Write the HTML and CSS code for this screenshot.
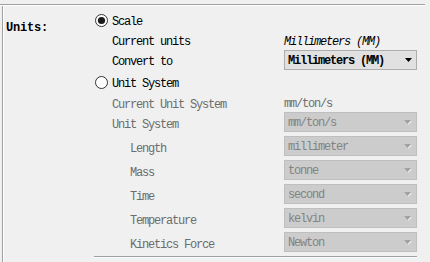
FILE: index.html
```html
<!DOCTYPE html>
<html>
<head>
<meta charset="utf-8">
<link rel="stylesheet" href="styles.css">
</head>
<body>
<div class="topline"></div>
<div class="frame">
  <div class="title">Units:</div>
  <div class="content">
    <div class="row radio-row">
      <svg class="radio" width="13" height="13" viewBox="0 0 13 13"><circle cx="6.5" cy="6.5" r="6" fill="#fff" stroke="#333"/><circle cx="6.5" cy="6.5" r="3.6" fill="#1a1a1a"/></svg>
      <span class="text">Scale</span>
    </div>
    <div class="row">
      <span class="label">Current units</span>
      <span class="value italic">Millimeters (MM)</span>
    </div>
    <div class="row">
      <span class="label">Convert to</span>
      <div class="select">
        <span class="sel-text strong">Millimeters (MM)</span>
        <svg class="arrow" width="7" height="4" viewBox="0 0 7 4"><path d="M0 0H7L3.5 4Z" fill="#000"/></svg>
      </div>
    </div>
    <div class="row radio-row second">
      <svg class="radio" width="13" height="13" viewBox="0 0 13 13"><circle cx="6.5" cy="6.5" r="6" fill="#fff" stroke="#333"/></svg>
      <span class="text">Unit System</span>
    </div>
    <div class="row dis">
      <span class="label">Current Unit System</span>
      <span class="value">mm/ton/s</span>
    </div>
    <div class="row dis">
      <span class="label">Unit System</span>
      <div class="select disabled"><span class="sel-text">mm/ton/s</span><svg class="arrow" width="8" height="5" viewBox="0 0 8 5"><path d="M0 0H7L3.5 4Z" fill="#a3a3a3"/><path d="M6 2L7 1L7.6 1.6L4.5 4.6L4 4Z" fill="#fff"/></svg></div>
    </div>
    <div class="row dis">
      <span class="label indent">Length</span>
      <div class="select disabled"><span class="sel-text">millimeter</span><svg class="arrow" width="8" height="5" viewBox="0 0 8 5"><path d="M0 0H7L3.5 4Z" fill="#a3a3a3"/><path d="M6 2L7 1L7.6 1.6L4.5 4.6L4 4Z" fill="#fff"/></svg></div>
    </div>
    <div class="row dis">
      <span class="label indent">Mass</span>
      <div class="select disabled"><span class="sel-text">tonne</span><svg class="arrow" width="8" height="5" viewBox="0 0 8 5"><path d="M0 0H7L3.5 4Z" fill="#a3a3a3"/><path d="M6 2L7 1L7.6 1.6L4.5 4.6L4 4Z" fill="#fff"/></svg></div>
    </div>
    <div class="row dis">
      <span class="label indent">Time</span>
      <div class="select disabled"><span class="sel-text">second</span><svg class="arrow" width="8" height="5" viewBox="0 0 8 5"><path d="M0 0H7L3.5 4Z" fill="#a3a3a3"/><path d="M6 2L7 1L7.6 1.6L4.5 4.6L4 4Z" fill="#fff"/></svg></div>
    </div>
    <div class="row dis">
      <span class="label indent">Temperature</span>
      <div class="select disabled"><span class="sel-text">kelvin</span><svg class="arrow" width="8" height="5" viewBox="0 0 8 5"><path d="M0 0H7L3.5 4Z" fill="#a3a3a3"/><path d="M6 2L7 1L7.6 1.6L4.5 4.6L4 4Z" fill="#fff"/></svg></div>
    </div>
    <div class="row dis">
      <span class="label indent">Kinetics Force</span>
      <div class="select disabled"><span class="sel-text">Newton</span><svg class="arrow" width="8" height="5" viewBox="0 0 8 5"><path d="M0 0H7L3.5 4Z" fill="#a3a3a3"/><path d="M6 2L7 1L7.6 1.6L4.5 4.6L4 4Z" fill="#fff"/></svg></div>
    </div>
    <div class="sep"></div>
  </div>
</div>
</body>
</html>
```
FILE: styles.css
```css
html, body {
  margin: 0;
  padding: 0;
  background: #f0f0f0;
  width: 430px;
  height: 262px;
  overflow: hidden;
  font-family: "Liberation Mono", "DejaVu Sans Mono", monospace;
  font-size: 12px;
  letter-spacing: -1.2px;
  color: #000;
}
.topline {
  margin-top: 4px;
  width: 425px;
  height: 1px;
  background: #a0a0a0;
  border-bottom: 1px solid #fff;
}
.frame {
  margin-left: 2px;
  height: 256px;
  border-left: 1px solid #a0a0a0;
  box-shadow: inset 1px 0 0 #fff;
  display: flex;
}
.title {
  width: 89px;
  padding-left: 3px;
  padding-top: 14px;
  height: 16px;
  line-height: 16px;
  font-weight: bold;
  letter-spacing: -0.2px;
}
.content {
  padding-top: 4px;
  display: flex;
  flex-direction: column;
}
.row {
  display: flex;
  align-items: center;
  height: 20px;
  padding-left: 17px;
}
.radio-row {
  padding-left: 0;
  gap: 4px;
}
.radio-row.second {
  margin-top: 2px;
}
.row.dis + .row.dis {
  margin-top: 4px;
}
.row.dis:nth-child(5) + .row.dis {
  margin-top: 0;
}
.radio {
  display: block;
  flex: none;
}
.text, .label, .value {
  padding-top: 4px;
  line-height: 16px;
}
.label {
  width: 172px;
  flex: none;
}
.label.indent {
  padding-left: 18px;
  width: 154px;
}
.dis .label, .dis .value {
  color: #6d6d6d;
}
.dis .label {
  padding-top: 5px;
}
.value.italic {
  font-style: italic;
}
.select {
  box-sizing: border-box;
  width: 133px;
  height: 20px;
  border: 1px solid #adadad;
  background: #e1e1e1;
  display: flex;
  align-items: center;
  justify-content: space-between;
  padding: 0 4px 0 3px;
}
.sel-text {
  padding-top: 2px;
  line-height: 16px;
}
.select.disabled {
  background: #cccccc;
  border-color: #bfbfbf;
  color: #838383;
}
.sel-text.strong {
  font-weight: bold;
}
.arrow {
  display: block;
  flex: none;
}
.sep {
  margin-top: 4px;
  margin-left: -1px;
  width: 323px;
  height: 1px;
  background: #a0a0a0;
  border-bottom: 1px solid #fff;
}
```
